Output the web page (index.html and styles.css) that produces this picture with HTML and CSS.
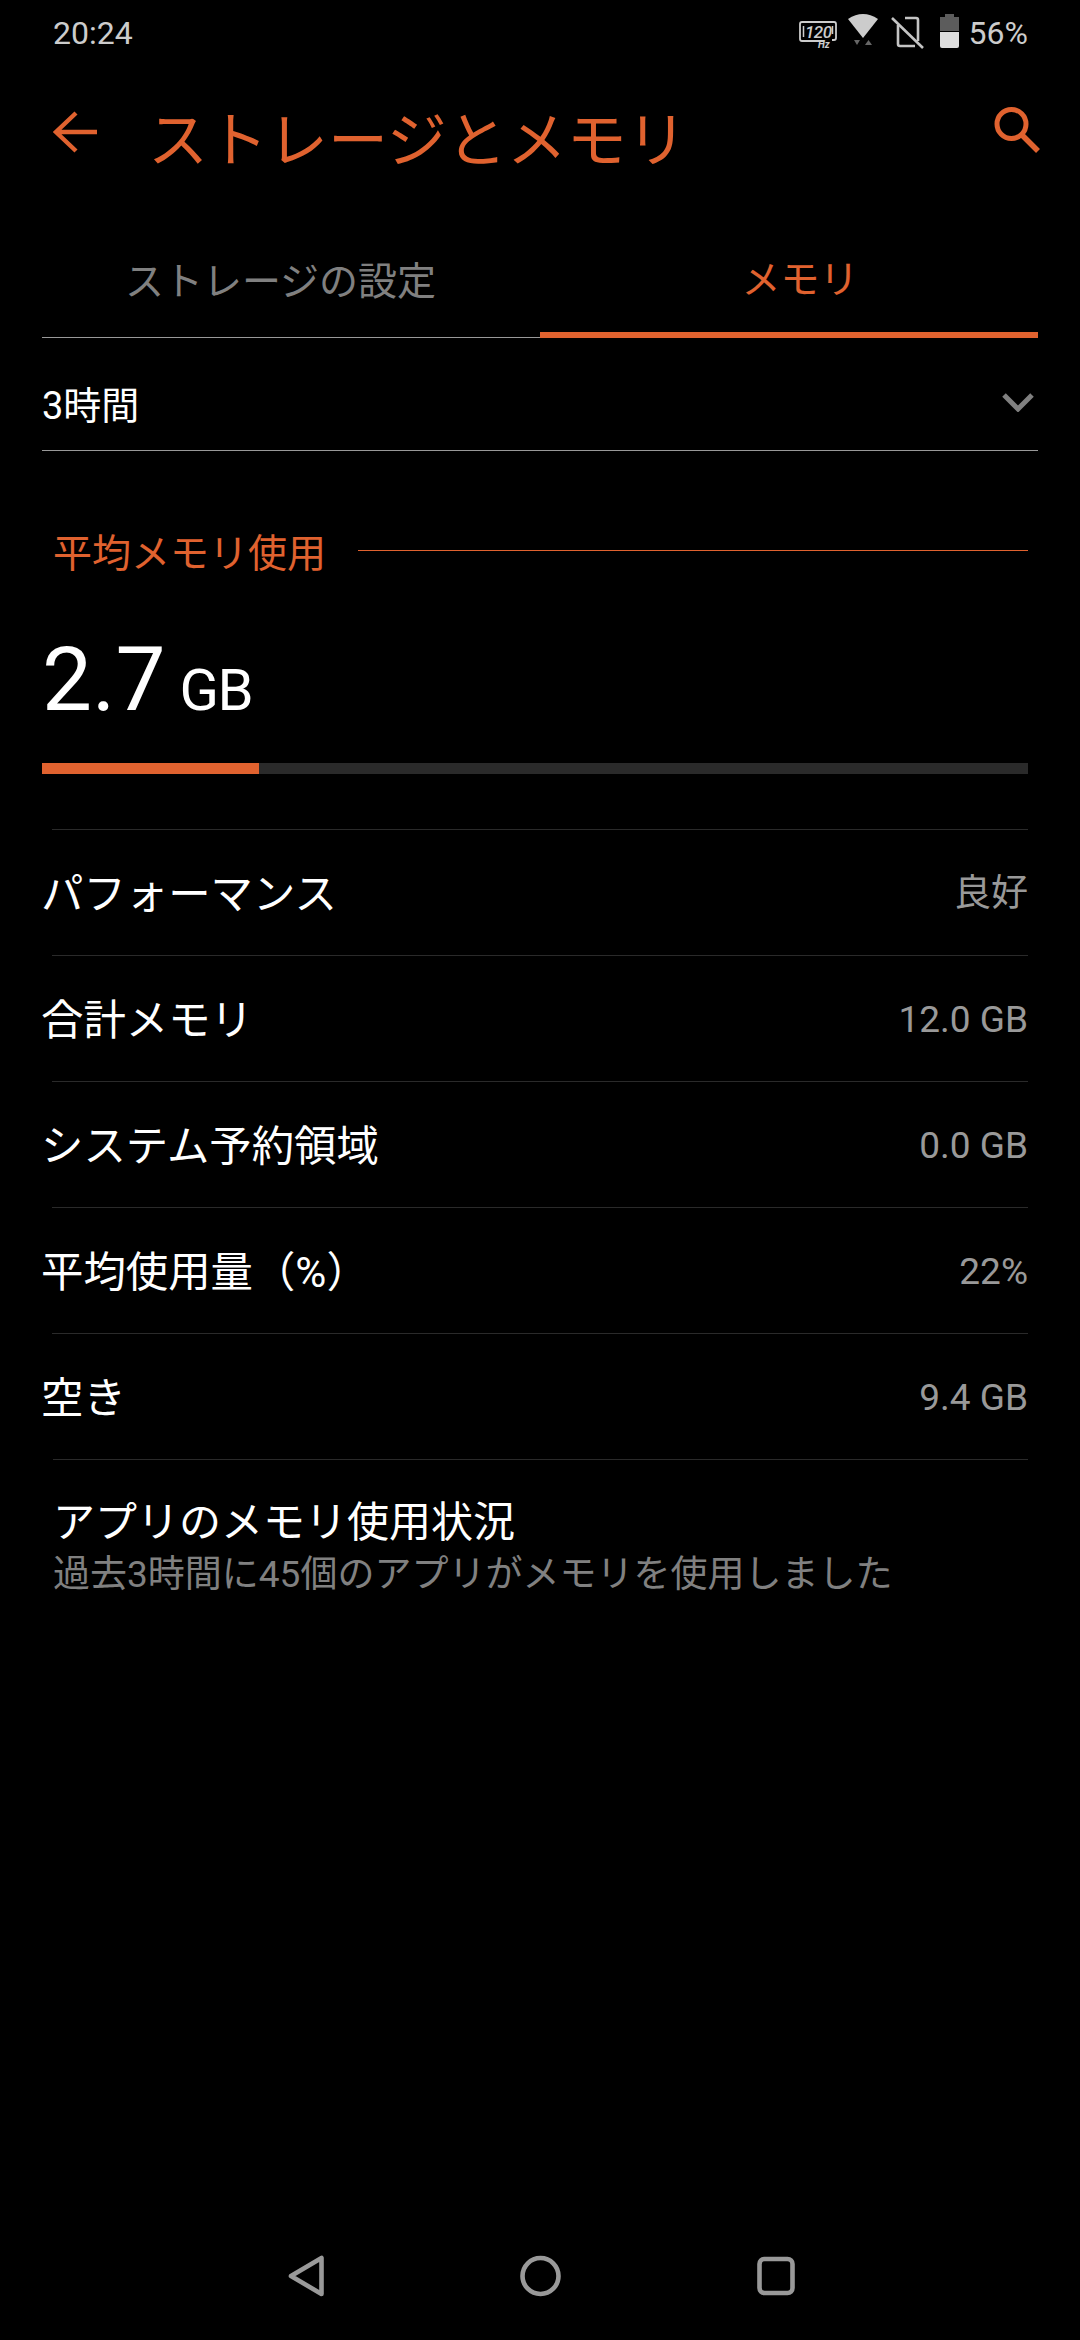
FILE: index.html
```html
<!DOCTYPE html>
<html lang="ja">
<head>
    <meta charset="UTF-8">
    <meta name="viewport" content="width=device-width, initial-scale=1.0">
    <title>ストレージとメモリ</title>
    <link rel="stylesheet" href="styles.css">
</head>
<body>
    <div class="screen">
        <div class="status-bar">
            <span class="clock">20:24</span>
            <div class="status-icons">
                <svg class="icon-hz" width="38" height="40" viewBox="0 0 38 40">
                    <path d="M3 9H35Q37 9 37 11V25Q37 27 35 27H33M25 28H3Q1 28 1 26V11Q1 9 3 9" fill="none" stroke="#ccc" stroke-width="1.800"/>
                    <path d="M4.500 13V24M33.500 13V21" stroke="#ccc" stroke-width="1.500"/>
                    <text x="6" y="25" class="hz-num">120</text>
                    <text x="19" y="35" class="hz-unit">Hz</text>
                </svg>
                <svg class="icon-wifi" width="30" height="40" viewBox="0 0 30 40">
                    <path d="M0 6Q15 -4 30 6L15 25Z" fill="#ccc"/>
                    <path d="M6 27H12L9 32Z" fill="#666"/>
                    <path d="M17 32H24L20.500 27Z" fill="#666"/>
                </svg>
                <svg class="icon-sim" width="33" height="40" viewBox="0 0 33 40">
                    <path d="M14 5H25Q27 5 27 7V28M24 33H9Q7 33 7 31V12" fill="none" stroke="#c4c4c4" stroke-width="2.600"/>
                    <path d="M1 5L32 35" stroke="#c4c4c4" stroke-width="2.600"/>
                </svg>
                <svg class="icon-battery" width="19" height="40" viewBox="0 0 19 40">
                    <path d="M5 1H14V4H19V18H0V4H5Z" fill="#5c5c5c"/>
                    <path d="M0 19H19V33Q19 35 17 35H2Q0 35 0 33Z" fill="#ddd"/>
                </svg>
                <span class="battery-pct">56%</span>
            </div>
        </div>

        <header class="app-bar">
            <svg class="back" width="44" height="44" viewBox="0 0 44 44">
                <path d="M23 3L3 22L23 41M3 22H44" fill="none" stroke="#e0622f" stroke-width="4.400"/>
            </svg>
            <h1>ストレージとメモリ</h1>
            <svg class="search" width="46" height="46" viewBox="0 0 46 46">
                <circle cx="17.500" cy="17" r="14.500" fill="none" stroke="#e0622f" stroke-width="5"/>
                <path d="M28 28L44 44" stroke="#e0622f" stroke-width="5.500"/>
            </svg>
        </header>

        <div class="tabs">
            <div class="tab">ストレージの設定</div>
            <div class="tab active">メモリ</div>
        </div>

        <div class="dropdown">
            <span>3時間</span>
            <svg width="32" height="20" viewBox="0 0 32 20">
                <path d="M2 3L16 17L30 3" fill="none" stroke="#808080" stroke-width="5"/>
            </svg>
        </div>

        <div class="section-title">
            <span>平均メモリ使用</span>
            <div class="section-rule"></div>
        </div>

        <div class="usage"><span class="usage-num">2.7</span><span class="usage-unit">GB</span></div>
        <div class="meter"><div class="meter-fill" style="width: 22%"></div></div>

        <ul class="stats">
            <li><span class="label">パフォーマンス</span><span class="val val-jp">良好</span></li>
            <li><span class="label">合計メモリ</span><span class="val">12.0 GB</span></li>
            <li><span class="label">システム予約領域</span><span class="val">0.0 GB</span></li>
            <li><span class="label">平均使用量（%）</span><span class="val">22%</span></li>
            <li><span class="label">空き</span><span class="val">9.4 GB</span></li>
        </ul>

        <div class="app-usage">
            <div class="app-usage-title">アプリのメモリ使用状況</div>
            <div class="app-usage-sub">過去3時間に45個のアプリがメモリを使用しました</div>
        </div>

        <nav class="nav-bar">
            <svg width="36" height="42" viewBox="0 0 36 42">
                <path d="M3 21L33.500 3V39Z" fill="none" stroke="#999" stroke-width="4.600" stroke-linejoin="round"/>
            </svg>
            <svg width="41" height="42" viewBox="0 0 41 42">
                <circle cx="20.500" cy="21" r="18" fill="none" stroke="#999" stroke-width="4.600"/>
            </svg>
            <svg width="38" height="40" viewBox="0 0 38 40">
                <rect x="2.500" y="3" width="33" height="34" rx="5" fill="none" stroke="#999" stroke-width="4.600"/>
            </svg>
        </nav>
    </div>
</body>
</html>
```

FILE: styles.css
```css
* {
    box-sizing: border-box;
}

body {
    margin: 0;
    background-color: #000;
    font-family: Roboto, "Noto Sans CJK JP", sans-serif;
    color: #fff;
}

.screen {
    width: 1080px;
    height: 2340px;
    display: flex;
    flex-direction: column;
    background-color: #000;
}

.status-bar {
    height: 66px;
    padding: 0 52px 0 53px;
    display: flex;
    justify-content: space-between;
    align-items: center;
    color: #ccc;
    font-size: 32px;
}

.status-icons {
    display: flex;
    align-items: center;
}

.status-icons svg {
    display: block;
}

.icon-hz {
    margin-right: 11px;
}

.icon-wifi {
    margin-right: 13px;
}

.icon-sim {
    margin-right: 16px;
}

.icon-battery {
    margin-right: 10px;
}

.hz-num {
    font-size: 17px;
    font-style: italic;
    font-weight: 500;
    letter-spacing: -0.5px;
    fill: #ccc;
}

.hz-unit {
    font-size: 10px;
    font-style: italic;
    font-weight: 700;
    fill: #ccc;
}

.app-bar {
    height: 138px;
    padding: 0 40px 0 53px;
    display: flex;
    align-items: center;
}

.back {
    flex-shrink: 0;
    margin-bottom: 6px;
}

.app-bar h1 {
    margin: 0 0 0 51px;
    flex-grow: 1;
    font-size: 60px;
    font-weight: 400;
    color: #e0622f;
}

.search {
    flex-shrink: 0;
    margin-bottom: 11px;
}

.tabs {
    margin: 0 42px 0;
    display: flex;
    height: 134px;
}

.tab {
    flex: 0 0 50%;
    display: flex;
    justify-content: center;
    align-items: center;
    padding: 15px 21px 0 0;
    font-size: 39px;
    color: #808080;
    border-bottom: 1px solid #999;
}

.tab.active {
    padding: 15px 0 0 22px;
    color: #e0622f;
    border-bottom: 6px solid #e0622f;
}

.dropdown {
    margin: 0 42px;
    height: 113px;
    display: flex;
    justify-content: space-between;
    align-items: center;
    padding: 16px 4px 0 0;
    font-size: 38px;
    border-bottom: 1px solid #999;
}

.section-title {
    margin: 71px 52px 0 53px;
    display: flex;
    align-items: center;
    font-size: 39px;
    color: #e0622f;
}

.section-rule {
    flex-grow: 1;
    height: 1px;
    margin-left: 32px;
    background-color: #e0622f;
}

.usage {
    margin: 49px 42px 0;
    height: 88px;
    display: flex;
    align-items: baseline;
}

.usage-num {
    font-size: 89px;
}

.usage-unit {
    margin-left: 14px;
    font-size: 58px;
    letter-spacing: -1.5px;
}

.meter {
    margin: 48px 52px 0 42px;
    height: 11px;
    background-color: #2a2a2a;
}

.meter-fill {
    height: 100%;
    background-color: #e0622f;
}

.stats {
    list-style: none;
    margin: 55px 52px 0 52px;
    padding: 0;
}

.stats li {
    height: 126px;
    display: flex;
    justify-content: space-between;
    align-items: center;
    border-top: 1px solid #2a2a2a;
    font-size: 42.4px;
}

.stats .label {
    margin-left: -11px;
    padding-bottom: 5px;
}

.stats .val {
    padding-top: 2px;
    font-size: 37px;
    color: #999;
}

.stats .val-jp {
    padding: 0 0 5px;
}

.app-usage {
    margin: 0 52px 0 53px;
    padding-top: 33px;
    border-top: 1px solid #2a2a2a;
}

.app-usage-title {
    font-size: 42px;
    line-height: 59px;
}

.app-usage-sub {
    font-size: 37px;
    line-height: 46px;
    color: #808080;
}

.nav-bar {
    margin-top: auto;
    height: 114px;
    padding: 0 0 14px 2px;
    display: flex;
    justify-content: center;
    align-items: center;
    gap: 196px;
}
```
